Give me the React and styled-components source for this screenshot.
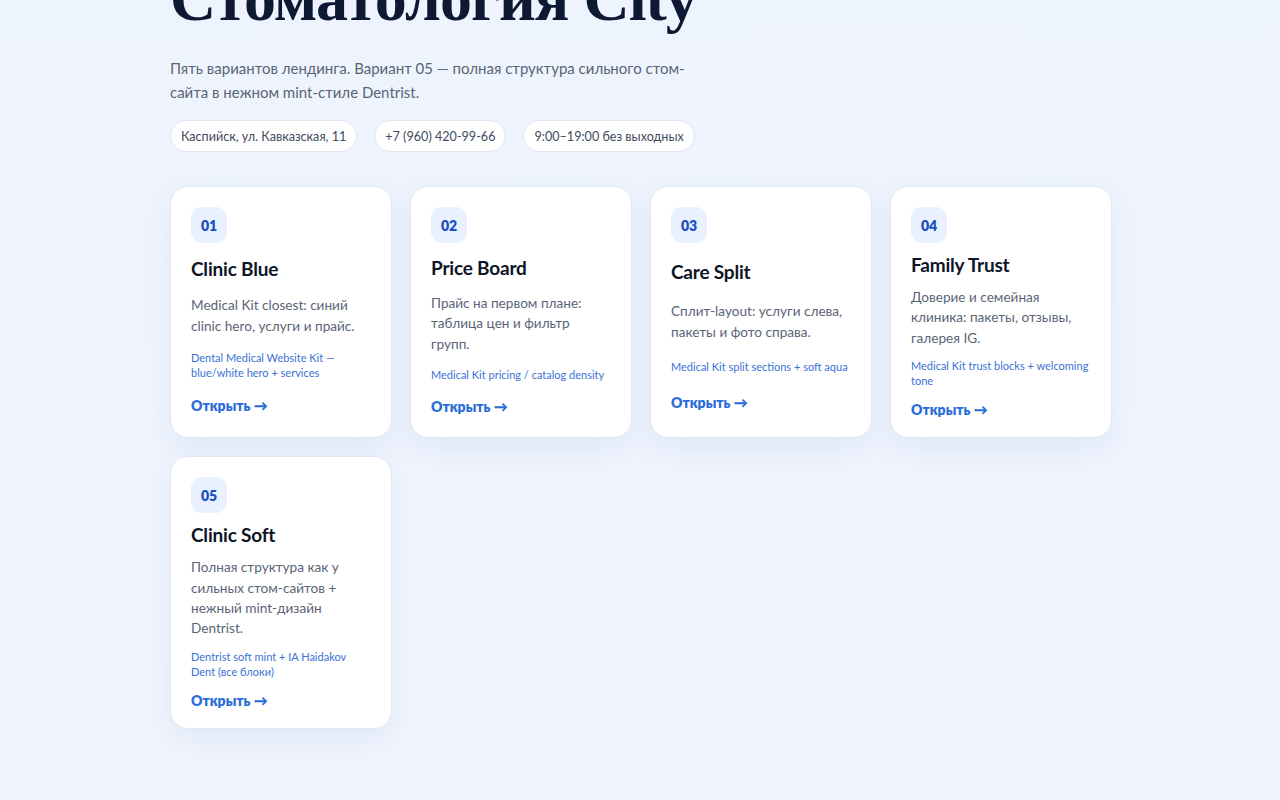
import React from "react";
import styled, { createGlobalStyle } from "styled-components";

const GlobalStyle = createGlobalStyle`
  html, body {
    margin: 0;
    padding: 0;
    background: #eff4fd;
  }
  body {
    font-family: "Lato", "Noto Sans", sans-serif;
    color: #0f172a;
    overflow: hidden;
  }
  * { box-sizing: border-box; }
`;

const Page = styled.div`
  min-height: 800px;
  background: linear-gradient(180deg, #eef4fe 0%, #f1f5fd 100%);
  padding: 0 170px 60px;
  overflow: hidden;
`;

const Header = styled.header`
  display: flex;
  flex-direction: column;
  align-items: flex-start;
`;

const Title = styled.h1`
  margin: -33px 0 0;
  font-family: "Liberation Serif", "DejaVu Serif", serif;
  font-weight: 700;
  font-size: 64px;
  line-height: 1;
  letter-spacing: -1px;
  color: #0d1833;
`;

const Lead = styled.p`
  margin: 25px 0 0;
  max-width: 540px;
  font-size: 15px;
  line-height: 24px;
  color: #5a6476;
`;

const Chips = styled.div`
  display: flex;
  gap: 17px;
  margin-top: 16px;
`;

const Chip = styled.span`
  display: inline-flex;
  align-items: center;
  height: 32px;
  padding: 0 10px;
  border: 1px solid #dfe6f2;
  border-radius: 16px;
  background: #fff;
  font-size: 12.6px;
  color: #3f4a5e;
`;

const Grid = styled.div`
  display: grid;
  grid-template-columns: repeat(4, 222px);
  gap: 18px;
  margin-top: 34px;
`;

const Card = styled.article`
  display: grid;
  gap: 10px;
  padding: 20px 20px 17px;
  background: #fff;
  border: 1px solid #e2e9f5;
  border-radius: 18px;
  box-shadow: 0 12px 30px rgba(90, 130, 200, 0.1);
`;

const Badge = styled.span`
  display: inline-flex;
  align-items: center;
  justify-content: center;
  width: 36px;
  height: 36px;
  border-radius: 11px;
  background: #eaf1fe;
  color: #1a4fc2;
  font-weight: 800;
  font-size: 14px;
`;

const CardTitle = styled.h2`
  margin: 0;
  font-size: 19px;
  line-height: 24px;
  font-weight: 700;
  color: #0d1526;
  letter-spacing: -0.2px;
`;

const Desc = styled.p`
  margin: 0;
  font-size: 13.6px;
  line-height: 20.4px;
  color: #5b6477;
`;

const Kit = styled.p`
  margin: 0;
  font-size: 11px;
  line-height: 15px;
  color: #3a72d4;
`;

const OpenLink = styled.a`
  margin-top: 2px;
  font-size: 14px;
  line-height: 20px;
  font-weight: 800;
  color: #2a6cdb;
  text-decoration: none;
`;

const variants = [
  {
    n: "01",
    title: "Clinic Blue",
    desc: "Medical Kit closest: синий clinic hero, услуги и прайс.",
    kit: "Dental Medical Website Kit — blue/white hero + services",
  },
  {
    n: "02",
    title: "Price Board",
    desc: "Прайс на первом плане: таблица цен и фильтр групп.",
    kit: "Medical Kit pricing / catalog density",
  },
  {
    n: "03",
    title: "Care Split",
    desc: "Сплит-layout: услуги слева, пакеты и фото справа.",
    kit: "Medical Kit split sections + soft aqua",
  },
  {
    n: "04",
    title: "Family Trust",
    desc: "Доверие и семейная клиника: пакеты, отзывы, галерея IG.",
    kit: "Medical Kit trust blocks + welcoming tone",
  },
  {
    n: "05",
    title: "Clinic Soft",
    desc: "Полная структура как у сильных стом-сайтов + нежный mint-дизайн Dentrist.",
    kit: "Dentrist soft mint + IA Haidakov Dent (все блоки)",
  },
];

export default function App() {
  return (
    <>
      <GlobalStyle />
      <Page>
        <Header>
          <Title>Стоматология City</Title>
          <Lead>
            Пять вариантов лендинга. Вариант 05 — полная структура сильного стом-сайта в нежном mint-стиле Dentrist.
          </Lead>
          <Chips>
            <Chip>Каспийск, ул. Кавказская, 11</Chip>
            <Chip>+7 (960) 420-99-66</Chip>
            <Chip>9:00–19:00 без выходных</Chip>
          </Chips>
        </Header>
        <Grid>
          {variants.map((v) => (
            <Card key={v.n}>
              <Badge>{v.n}</Badge>
              <CardTitle>{v.title}</CardTitle>
              <Desc>{v.desc}</Desc>
              <Kit>{v.kit}</Kit>
              <OpenLink href="#">Открыть →</OpenLink>
            </Card>
          ))}
        </Grid>
      </Page>
    </>
  );
}
